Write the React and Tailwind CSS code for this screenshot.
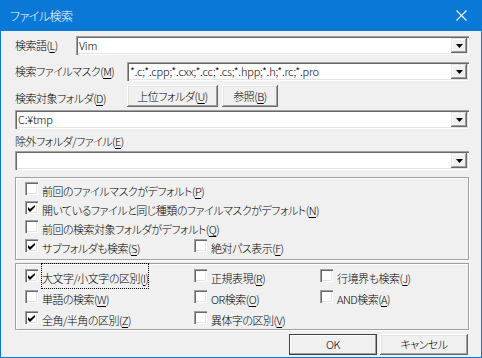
import React from 'react';

const FONT = "[font-family:'Noto_Sans_CJK_JP','Noto_Sans',sans-serif] [font-feature-settings:'palt'] font-light";

// Underlined access key, e.g. 検索語(L)
function Label({ text, k, className = '' }) {
    return (
        <span className={`whitespace-nowrap leading-none text-[11px] tracking-[-0.5px] ${className}`}>
            {text}(<span className="underline underline-offset-2">{k}</span>)
        </span>
    );
}

function Combo({ value, className = '' }) {
    return (
        <div className={`h-[19px] flex items-stretch bg-white shadow-[inset_1px_1px_0_#a0a0a0,inset_2px_2px_0_#696969,inset_-1px_-1px_0_#fff,inset_-2px_-2px_0_#e3e3e3] p-[2px] ${className}`}>
            <div className="flex-1 flex items-center pl-[1px] text-[11px] tracking-[-0.2px] text-black leading-none">{value}</div>
            <div className="w-[16px] bg-[#f0f0f0] flex items-center justify-center shadow-[inset_-1px_-1px_0_#696969,inset_1px_1px_0_#e3e3e3,inset_-2px_-2px_0_#a0a0a0,inset_2px_2px_0_#fff]">
                <svg width="7" height="4" viewBox="0 0 7 4"><path d="M0 0h7L3.5 4z" fill="#000" /></svg>
            </div>
        </div>
    );
}

function Button({ children, className = '', isDefault = false }) {
    return (
        <div className={`flex items-center justify-center bg-[#f0f0f0] text-[11px] tracking-[-0.5px] text-black leading-none ${isDefault ? 'border border-[#404040] shadow-[inset_-1px_-1px_0_#a0a0a0,inset_1px_1px_0_#fff]' : 'shadow-[inset_-1px_-1px_0_#696969,inset_1px_1px_0_#fff,inset_-2px_-2px_0_#a0a0a0,inset_2px_2px_0_#e3e3e3]'} ${className}`}>
            {children}
        </div>
    );
}

function Check({ checked, text, k, focus = false, className = '' }) {
    return (
        <div className={`flex items-center gap-[4px] ${className}`}>
            <div className="w-[13px] h-[13px] bg-white shrink-0 shadow-[inset_1px_1px_0_#a0a0a0,inset_2px_2px_0_#696969,inset_-1px_-1px_0_#fff,inset_-2px_-2px_0_#e3e3e3] flex items-center justify-center">
                {checked && (
                    <svg width="7" height="7" viewBox="0 0 7 7" className="mt-px"><path d="M0 2v3l2 2 5-5V0L2 4z" fill="#000" /></svg>
                )}
            </div>
            <span className={focus ? 'outline-1 outline-dotted outline-black' : ''}>
                <Label text={text} k={k} className="text-black" />
            </span>
        </div>
    );
}

export default function App() {
    return (
        <div className={`w-[482px] h-[358px] bg-[#0a78d7] px-px pb-px flex flex-col ${FONT}`}>
            {/* Title bar */}
            <div className="h-[31px] shrink-0 flex items-center justify-between pl-[9px] pr-[14px]">
                <span className="text-white text-[12px] tracking-[-0.5px] leading-none">ファイル検索</span>
                <svg width="11" height="11" viewBox="0 0 11 11"><path d="M0.5 0.5l10 10M10.5 0.5l-10 10" stroke="#fff" strokeWidth="1.1" /></svg>
            </div>

            {/* Body */}
            <div className="flex-1 bg-[#f0f0f0] pl-[14px] pr-[12px] flex flex-col text-black">
                <div className="mt-[5px] flex items-center">
                    <Label text="検索語" k="L" className="w-[61px]" />
                    <Combo value="Vim" className="flex-1" />
                </div>
                <div className="mt-[7px] flex items-center">
                    <Label text="検索ファイルマスク" k="M" className="w-[112px]" />
                    <Combo value="*.c;*.cpp;*.cxx;*.cc;*.cs;*.hpp;*.h;*.rc;*.pro" className="flex-1" />
                </div>
                <div className="mt-[4px] flex items-center h-[22px]">
                    <Label text="検索対象フォルダ" k="D" className="w-[112px] pt-[4px]" />
                    <Button className="w-[91px] h-[22px]"><Label text="上位フォルダ" k="U" /></Button>
                    <Button className="w-[56px] h-[22px] ml-[4px]"><Label text="参照" k="B" /></Button>
                </div>
                <Combo value="C:¥tmp" className="mt-[3px]" />
                <div className="mt-[5px] h-[14px] flex items-center">
                    <Label text="除外フォルダ/ファイル" k="E" />
                </div>
                <Combo value="" className="mt-[3px]" />

                {/* Options group */}
                <div className="mt-[7px] h-[83px] border border-[#a0a0a0] shadow-[inset_1px_1px_0_#fff,1px_1px_0_#fff] pl-[9px] pt-[1px] flex flex-col">
                    <Check className="h-[19px]" text="前回のファイルマスクがデフォルト" k="P" />
                    <Check className="h-[19px]" checked text="開いているファイルと同じ種類のファイルマスクがデフォルト" k="N" />
                    <Check className="h-[19px]" text="前回の検索対象フォルダがデフォルト" k="Q" />
                    <div className="h-[19px] flex items-center">
                        <Check className="w-[169px]" checked text="サブフォルダも検索" k="S" />
                        <Check text="絶対パス表示" k="F" />
                    </div>
                </div>

                {/* Match group */}
                <div className="mt-[3px] h-[67px] border border-[#a0a0a0] shadow-[inset_1px_1px_0_#fff,1px_1px_0_#fff] pl-[9px] pt-[1px] grid grid-cols-[169px_126px_1fr] auto-rows-[21px] items-center">
                    <Check checked focus text="大文字/小文字の区別" k="I" />
                    <Check text="正規表現" k="R" />
                    <Check text="行境界も検索" k="J" />
                    <Check text="単語の検索" k="W" />
                    <Check text="OR検索" k="O" />
                    <Check text="AND検索" k="A" />
                    <Check checked text="全角/半角の区別" k="Z" />
                    <Check text="異体字の区別" k="V" />
                </div>

                <div className="mt-[4px] flex justify-end gap-[3px] pr-px">
                    <Button isDefault className="w-[88px] h-[21px]">OK</Button>
                    <Button className="w-[88px] h-[21px]">キャンセル</Button>
                </div>
            </div>
        </div>
    );
}
